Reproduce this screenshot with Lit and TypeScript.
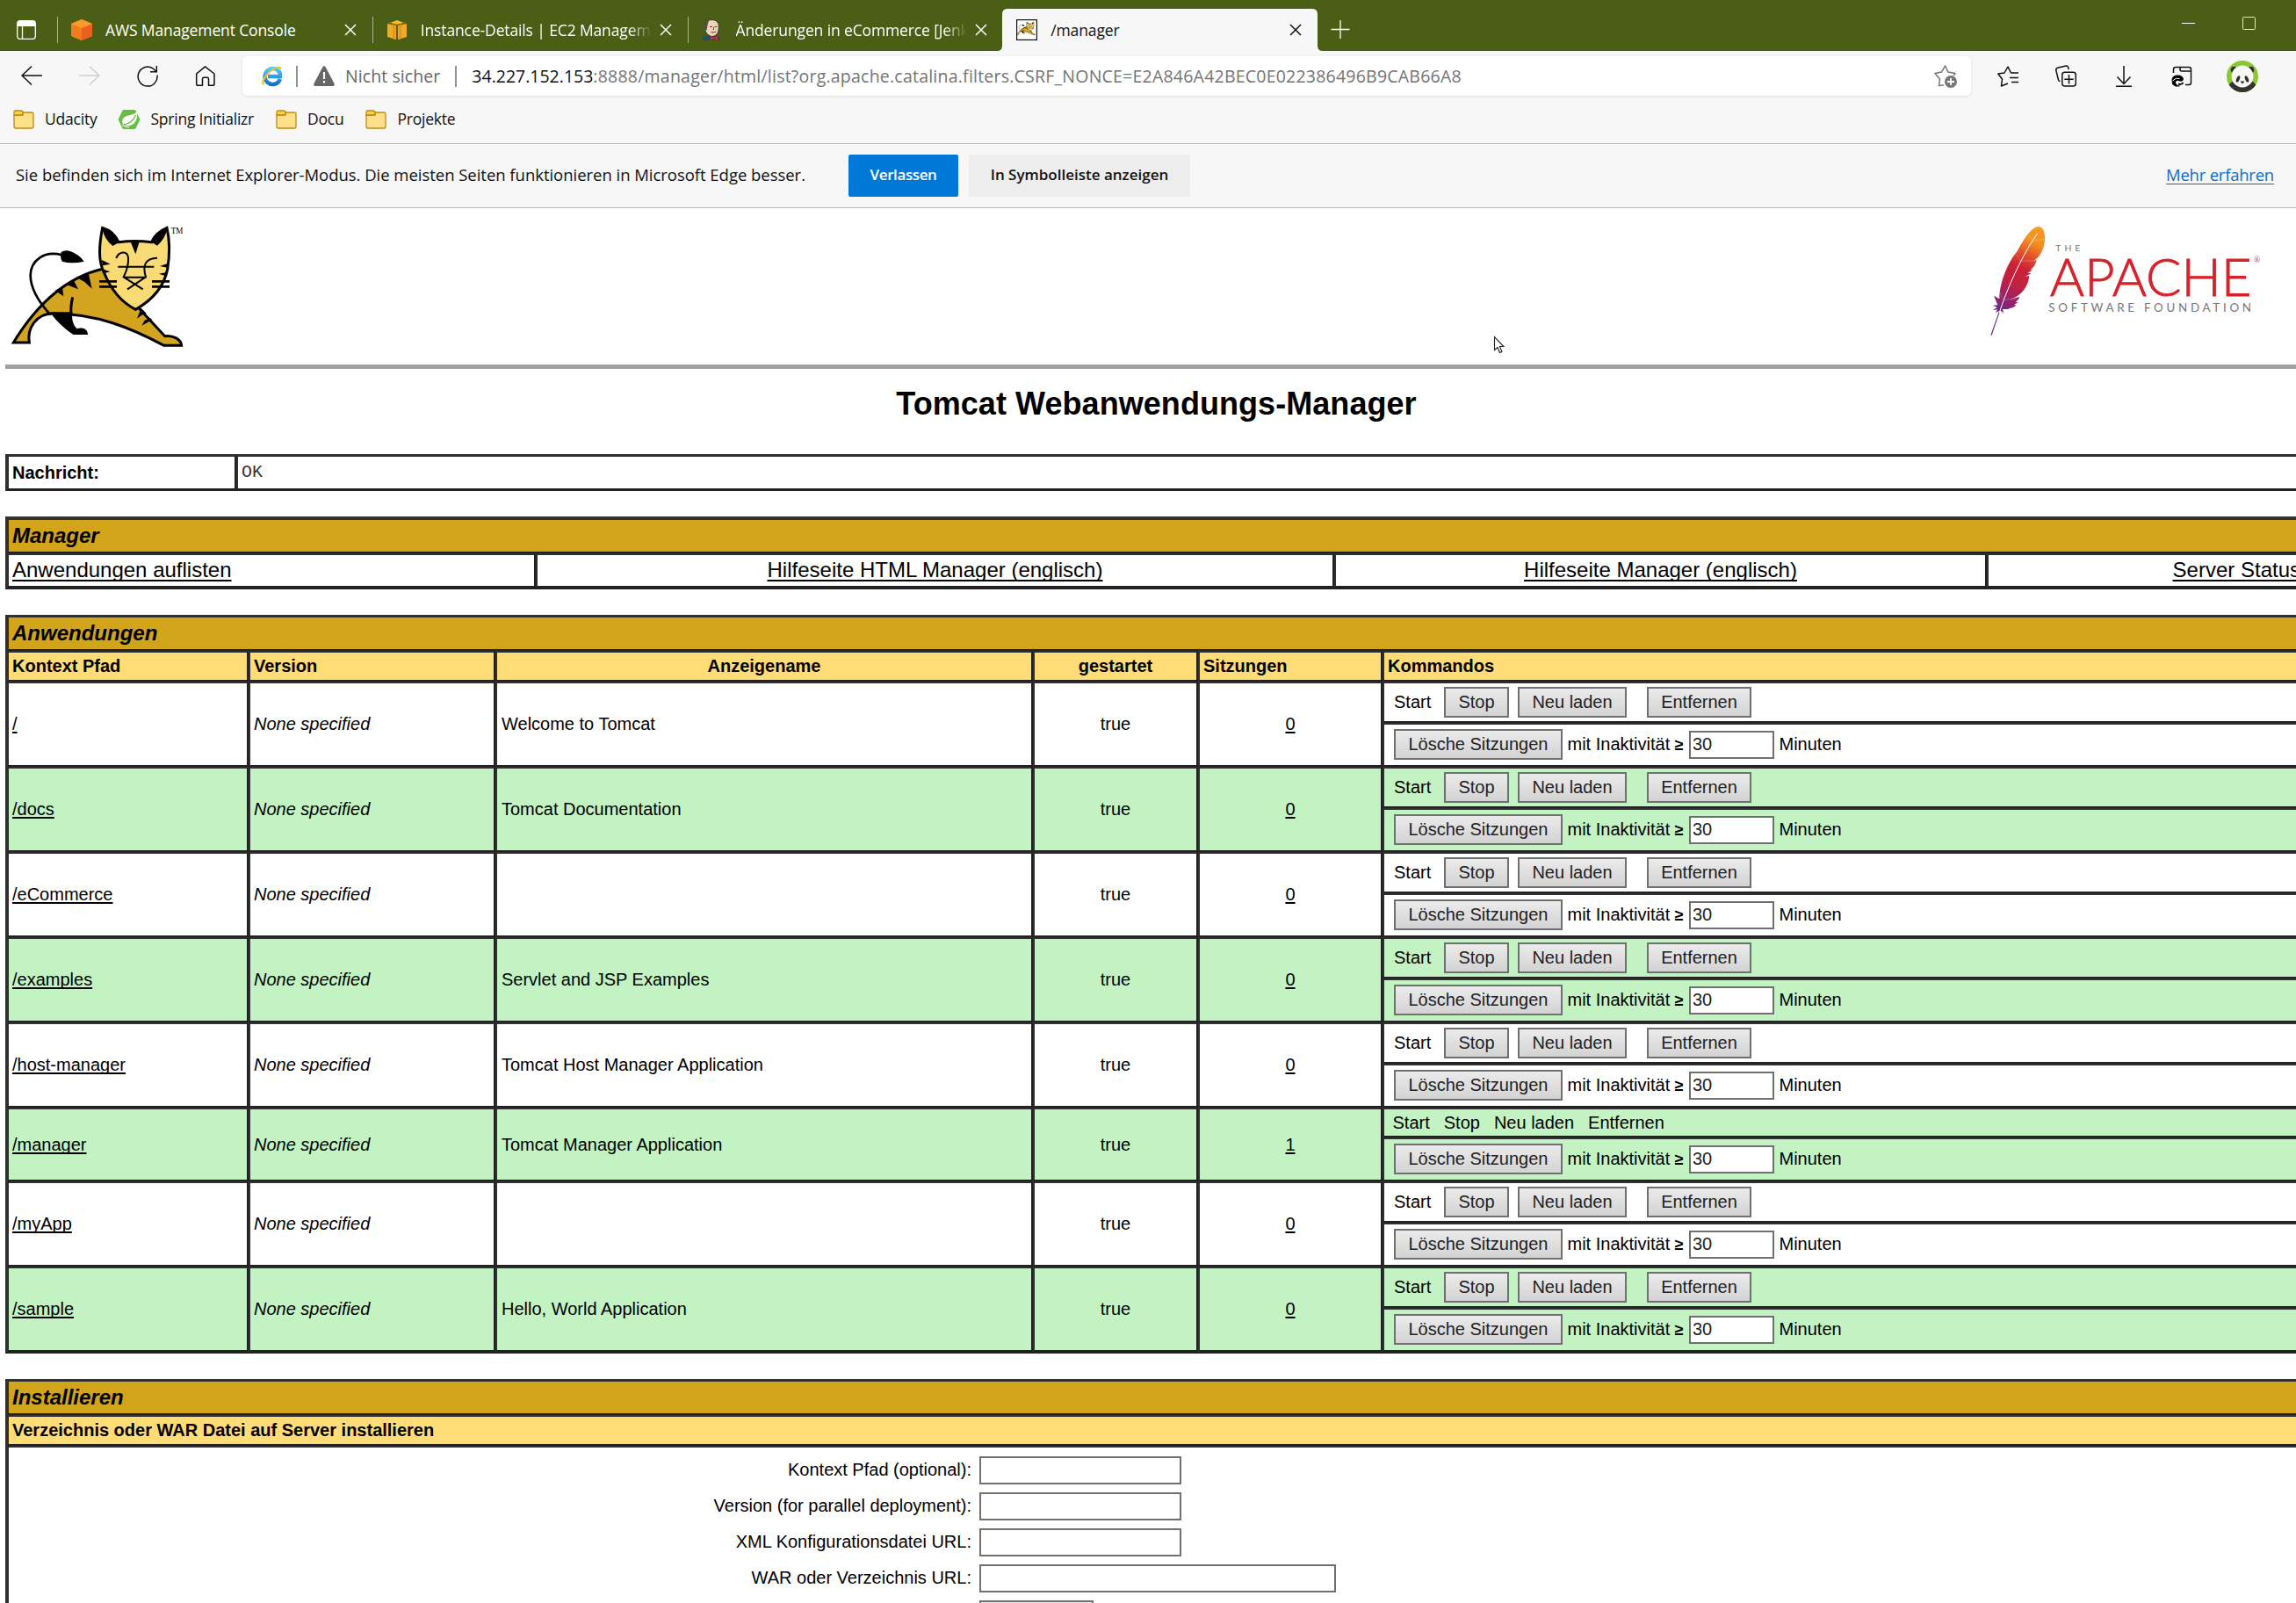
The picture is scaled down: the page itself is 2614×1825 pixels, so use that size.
import { LitElement, html, css, svg, nothing } from 'lit';
import { customElement, property } from 'lit/decorators.js';

interface WebApp {
  path: string;
  name: string;
  sessions: number;
  locked?: boolean;
}

const APPS: WebApp[] = [
  { path: '/', name: 'Welcome to Tomcat', sessions: 0 },
  { path: '/docs', name: 'Tomcat Documentation', sessions: 0 },
  { path: '/eCommerce', name: '', sessions: 0 },
  { path: '/examples', name: 'Servlet and JSP Examples', sessions: 0 },
  { path: '/host-manager', name: 'Tomcat Host Manager Application', sessions: 0 },
  { path: '/manager', name: 'Tomcat Manager Application', sessions: 1, locked: true },
  { path: '/myApp', name: '', sessions: 0 },
  { path: '/sample', name: 'Hello, World Application', sessions: 0 },
];

const catBody = svg`
  <path d="M46 480C110 375 205 262 352 228L420 320L472 360L563 458C592 455 618 468 620 490H560C450 432 330 380 180 381C122 382 92 432 100 480Z" fill="#d2a41f" stroke="#000" stroke-width="9"/>
  <path d="M211 181C150 165 105 200 104 250C104 300 138 348 172 385" fill="none" stroke="#000" stroke-width="8"/>
  <path d="M209 171Q222 162 240 168Q272 180 287 203Q245 213 212 203Q204 188 209 171Z"/>
  <path d="M170 376H248C243 400 250 420 262 432C285 427 300 434 300 453H250Q203 422 170 376Z"/>
  <path d="M248 325Q240 360 243 385" fill="none" stroke="#000" stroke-width="9"/>
  <path d="M262 258L302 242L314 296L288 272ZM226 281L252 268L267 298ZM188 302L213 292L217 322Z"/>
  <path d="M482 362L468 398L484 386L500 380ZM520 402L484 422L494 404L512 396Z"/>
  <path d="M350 88C338 150 335 200 355 240C375 290 410 340 463 367C520 335 560 290 572 230C580 180 580 130 570 88C545 98 525 118 518 137Q460 130 405 137Q390 100 350 88Z" fill="#f8db74" stroke="#000" stroke-width="9"/>
  <path d="M350 92Q395 105 405 139L385 150Q355 125 350 92ZM570 92Q525 105 515 135L537 149Q566 122 570 92ZM446 136H476L463 178Z"/>
  <path d="M348 198L377 212L350 217ZM354 230L376 238L358 243ZM572 210L546 219L572 224ZM568 240L543 245L564 252Z"/>
  <path d="M397 192C405 168 437 164 438 190C440 222 430 240 422 256L488 298M537 191C495 192 486 218 498 256L435 298M422 257H500M403 221H526" fill="none" stroke="#000" stroke-width="6"/>
  <path d="M339 271H399M339 289H399M519 271H579M519 289H579" stroke="#000" stroke-width="8"/>`;

const closeIcon = svg`<svg class="close" viewBox="0 0 14 14" width="14" height="14"><path d="M1 1L13 13M13 1L1 13" stroke="currentColor" stroke-width="1.5"/></svg>`;

const awsCube = svg`<svg viewBox="0 0 24 24" width="24" height="24"><path d="M12 0L24 5V19L12 24L0 19V5Z" fill="#f58220"/><path d="M0 5L12 10V24L0 19Z" fill="#f27d1d"/><path d="M24 5L12 10V24L24 19Z" fill="#e9601f"/><path d="M12 0L24 5L12 10L0 5Z" fill="#fb9a2a"/></svg>`;
const ec2Cube = svg`<svg viewBox="0 0 24 24" width="24" height="24"><path d="M1 5L11 7V23L1 20Z" fill="#f0ac26"/><path d="M23 5L13 7V23L23 20Z" fill="#f0ac26"/><path d="M4 4L12 1L20 4L12 6Z" fill="#f8b92c"/><path d="M7 6L10 7V23L7 22ZM17 6L14 7V23L17 22Z" fill="#e29b16"/><path d="M12 7V22" stroke="#6b5614" stroke-width="1.6"/><path d="M2 4L12 6.5L22 4" stroke="#8a6912" stroke-width="1" fill="none"/></svg>`;
const jenkins = svg`<svg viewBox="0 0 24 24" width="24" height="24"><path d="M1 24V21Q5 17.500 10 17.500L19 19Q21 21 21 24Z" fill="#2f4b63"/><path d="M3.500 10C2.500 3 7 .6 11 .6C17 .6 20 4 19.300 10C19 16 16 19.500 11.500 19.500C6.500 18.500 4 15 3.500 10Z" fill="#efd4b5" stroke="#3d2f25" stroke-width="1"/><path d="M3 12C1.500 4 5 1 9 .8C6 4 7 8 5.500 12.500Z" fill="#55504a"/><path d="M9 8.500H12M14.500 8.500H17.500M10.500 14.500Q13 16 16 14M13.500 9V12" stroke="#5b4030" stroke-width="1" fill="none"/><path d="M10 19V24L14 22L18 24V19L14 21Z" fill="#d8262b"/></svg>`;
const catIcon = svg`<svg viewBox="0 0 24 24" width="24" height="24"><rect x=".6" y=".6" width="22.8" height="22.8" fill="#fff" stroke="#111" stroke-width="1.2"/><g transform="translate(.6 2.2) scale(.036) translate(-36 -60)">${catBody}</g></svg>`;
const folder = svg`<svg viewBox="0 0 24 22" width="24" height="22"><path d="M1 6V19Q1 21 3 21H21Q23 21 23 19V5Q23 3 21 3H11V6Z" fill="#ffe08a" stroke="#b98c10" stroke-width="1.3"/><path d="M1 6V2.5Q1 1 2.5 1H9Q11 1 11 3Q11 6 8 6Z" fill="#ffcf3f" stroke="#b98c10" stroke-width="1.3"/></svg>`;
const spring = svg`<svg viewBox="0 0 24 22" width="24" height="22"><path d="M6 0H18Q19 0 19.600 1L24 10Q24.300 11 24 12L19.600 21Q19 22 18 22H6Q5 22 4.400 21L0 12Q-.3 11 0 10L4.400 1Q5 0 6 0Z" fill="#6abd45"/><path d="M21 2C18 7 7 5 4.500 11C3 15 6 18.500 11 18C18 18 22 12 21 2Z" fill="#fff"/><path d="M6 17C12 16 17 12 19.500 6" stroke="#6abd45" stroke-width="1.300" fill="none"/><path d="M4 17Q7 20 12 19.500" stroke="#fff" stroke-width="1" fill="none"/></svg>`;

@customElement('browser-tabs')
class BrowserTabs extends LitElement {
  static styles = css`
    :host { display: flex; height: 58px; background: #4a5f15; color: #fff; font: 17.5px/24px "Open Sans", "Noto Sans", sans-serif; letter-spacing: -0.13px; }
    .lead { width: 65px; display: flex; align-items: center; padding: 9px 0 0 19px; box-sizing: border-box; }
    .tab { width: 358.75px; box-sizing: border-box; display: flex; align-items: center; padding: 10px 0 0 16px; position: relative; }
    .tab::before { content: ""; position: absolute; left: 0; top: 19px; height: 30px; width: 1px; background: #a8b18d; }
    .tab.active::before { display: none; }
    .tab > svg { flex: none; }
    .title { width: 263px; margin-left: 15px; white-space: nowrap; overflow: hidden; }
    .fade { -webkit-mask-image: linear-gradient(90deg, #000 90%, transparent 100%); mask-image: linear-gradient(90deg, #000 90%, transparent 100%); }
    .tab .close { margin-left: 9px; }
    .active { color: #111; }
    .active .shape { position: absolute; left: -6px; top: 10px; }
    .active .title, .active > .close, .active > svg:not(.shape) { position: relative; }
    .plus { padding: 23px 0 0 15px; }
    .window { margin-left: auto; display: flex; gap: 53px; padding: 18px 45px 0 0; }
  `;
  render() {
    const tab = (icon: unknown, title: string, fade = false) => html`
      <div class="tab">${icon}<span class="title ${fade ? 'fade' : ''}">${title}</span>${closeIcon}</div>`;
    return html`
      <div class="lead"><svg width="22" height="22" viewBox="0 0 22 22"><rect x=".7" y=".7" width="20.600" height="20.600" rx="3" fill="none" stroke="#fff" stroke-width="1.300"/><path d="M1 7V3Q1 1 3 1H19Q21 1 21 3V7Z" fill="#fff"/><path d="M6.500 6V21" stroke="#fff" stroke-width="1.300"/></svg></div>
      ${tab(awsCube, 'AWS Management Console')}
      ${tab(ec2Cube, 'Instance-Details | EC2 Management', true)}
      ${tab(jenkins, 'Änderungen in eCommerce [Jenkins]', true)}
      <div class="tab active">
        <svg class="shape" width="371" height="48" viewBox="0 0 371 48"><path d="M0 48Q6 48 6 42V6Q6 0 12 0H359Q365 0 365 6V42Q365 48 371 48Z" fill="#f7f7f7"/></svg>
        ${catIcon}<span class="title">/manager</span>${closeIcon}
      </div>
      <div class="plus"><svg width="22" height="22" viewBox="0 0 22 22"><path d="M11 0V21M.5 10.500H21.500" stroke="#fff" stroke-width="1.300"/></svg></div>
      <div class="window">
        <svg width="16" height="17" viewBox="0 0 16 17"><path d="M0 8.500H15" stroke="#fff" stroke-width="1"/></svg>
        <svg width="16" height="17" viewBox="0 0 16 17"><rect x=".5" y="1.500" width="14" height="14" rx="1" fill="none" stroke="#dfe3d5"/></svg>
      </div>`;
  }
}

@customElement('browser-toolbar')
class BrowserToolbar extends LitElement {
  static styles = css`
    :host { display: block; background: #f7f7f7; font-family: "Open Sans", "Noto Sans", sans-serif; color: #111; }
    .bar { display: flex; align-items: center; height: 45px; padding-top: 6px; }
    svg { flex: none; display: block; }
    .nav { width: 252px; padding-left: 24px; display: flex; gap: 42px; flex: none; }
    .address { width: 1968px; flex: none; height: 45px; box-sizing: border-box; border-radius: 6px; background: #fff; box-shadow: 0 1px 4px rgba(0,0,0,.09); display: flex; align-items: center; padding: 0 14px 0 22px; font-size: 19.5px; white-space: pre; }
    .sep { width: 2px; height: 24px; background: #919191; }
    .sep.a { margin: 0 18px 0 16px; }
    .sep.b { margin: 0 17px 0 17px; }
    .insecure { color: #666; margin-left: 12px; letter-spacing: .08px; }
    .rest { color: #747474; letter-spacing: .225px; flex: 1; }
    .tools { display: flex; align-items: center; gap: 42px; padding-left: 30px; width: 340px; overflow: hidden; box-sizing: border-box; }
    .panda { margin-left: -3px; }
    .dots { margin-left: -2px; }
    .marks { display: flex; align-items: center; height: 54px; padding-left: 15px; font-size: 17.5px; letter-spacing: -.22px; border-bottom: 1px solid #bdbdbd; }
    .marks span { margin-left: 12px; margin-right: 25px; padding-bottom: 2px; }
    .hint { display: flex; align-items: center; height: 72px; padding-left: 18px; border-bottom: 1px solid #bdbdbd; }
    .msg { font-size: 18.5px; width: 948px; letter-spacing: -.03px; white-space: nowrap; padding-bottom: 3px; }
    .btn { height: 48px; line-height: 46px; border-radius: 2px; font-size: 17px; font-weight: 600; text-align: center; background: #ededed; width: 252px; color: #111; }
    .btn.go { width: 125px; background: #0078d7; color: #fff; margin-right: 12px; letter-spacing: -.4px; }
    .more { margin-left: auto; margin-right: 25px; padding-bottom: 3px; color: #0f6cc4; font-size: 18.5px; letter-spacing: -.22px; text-decoration: underline; text-underline-offset: 3px; text-decoration-thickness: 1px; }
  `;
  render() {
    return html`
      <div class="bar">
        <div class="nav">
          <svg width="24" height="24" viewBox="0 0 24 24" fill="none" stroke="#111" stroke-width="1.500"><path d="M12 .5L1 11L12 21.500M1 11H24"/></svg>
          <svg width="24" height="24" viewBox="0 0 24 24" fill="none" stroke="#cfcfcf" stroke-width="1.500"><path d="M12 .5L23 11L12 21.500M23 11H0"/></svg>
          <svg width="24" height="24" viewBox="0 0 24 24" fill="none" stroke="#111" stroke-width="1.500"><path d="M23 10.500A11 11 0 1 1 18 2.800L22 6.500M22.300 0V6.700H15"/></svg>
          <svg width="24" height="24" viewBox="0 0 24 24" fill="none" stroke="#111" stroke-width="1.500" stroke-linejoin="round"><path d="M1.700 9L11.500 .8L22 9V20.500Q22 22.300 20.300 22.300H15.500V15Q15.500 13.300 14 13.300H10Q8.500 13.300 8.500 15V22.300H3.500Q1.700 22.300 1.700 20.500Z"/></svg>
        </div>
        <div class="address">
          <svg width="23" height="24" viewBox="0 0 23 24"><defs><linearGradient id="ie" x1="0" y1="0" x2="0" y2="1"><stop offset="0" stop-color="#56c8f5"/><stop offset="1" stop-color="#1174c8"/></linearGradient></defs><path d="M21 15A9 9 0 1 1 21.500 12H7" fill="none" stroke="url(#ie)" stroke-width="4.500"/><path d="M3 21C-2 20 4 11 10 6S22 0 21 4" fill="none" stroke="#f9bd1e" stroke-width="2"/></svg>
          <span class="sep a"></span>
          <svg width="24" height="24" viewBox="0 0 24 24"><path d="M12 0Q13 0 14 2L23.500 20Q24.500 23 22 23H2Q-.5 23 .5 20L10 2Q11 0 12 0Z" fill="#666"/><path d="M12 7V15M12 17V19.500" stroke="#fff" stroke-width="2.200"/></svg>
          <span class="insecure">Nicht sicher</span><span class="sep b"></span><span>34.227.152.153</span><span class="rest">:8888/manager/html/list?org.apache.catalina.filters.CSRF_NONCE=E2A846A42BEC0E022386496B9CAB66A8</span>
          <svg width="28" height="26" viewBox="0 0 28 26" fill="none" stroke="#777" stroke-width="1.500"><path d="M11 23L5.500 23.500L6.500 16L1 9.500L8.500 8L12.500 1L16 8L24 9.500L22 12"/><circle cx="19" cy="19" r="7" fill="#777" stroke="none"/><path d="M15 19H23M19 15V23" stroke="#fff" stroke-width="1.800"/></svg>
        </div>
        <div class="tools">
          <svg width="24" height="24" viewBox="0 0 24 24" fill="none" stroke="#111" stroke-width="1.500" stroke-linejoin="round"><path d="M12 20L4.500 23L5.500 15L.8 9L8 8L12 1L15.500 8H24M14 13.500H24M16 18.500H24"/></svg>
          <svg width="24" height="25" viewBox="0 0 24 25" fill="none" stroke="#111" stroke-width="1.500"><rect x="7.800" y="8.200" width="15.500" height="15.800" rx="3"/><path d="M15.500 11V21.500M10.300 16.200H20.800M5.500 18.500Q4 18.500 3.500 17L.8 6Q.5 4 2.500 3.300L12 1Q14 .7 14.600 2.500L15.200 5"/></svg>
          <svg width="24" height="24" viewBox="0 0 24 24" fill="none" stroke="#111" stroke-width="1.500"><path d="M12 0V20M4.500 12.500L12 20.500L19.500 12.500M3 23.200H21"/></svg>
          <svg width="24" height="24" viewBox="0 0 24 24" fill="none" stroke="#111" stroke-width="1.500"><path d="M2.500 8V4Q2.500 1.500 5 1.500H20Q22.500 1.500 22.500 4V19Q22.500 21.500 20 21.500H16M10 1.500V4Q10 6 12 6H22"/><path d="M.5 16Q1 10.500 7.500 10.500Q13 10.500 14 15Q13.500 18 9.500 17.500Q6 15.500 5 18.500Q5 22 10.500 23Q4 25 1 20.500Z" fill="#000" stroke="none"/><path d="M1.500 17Q5 12.800 9.500 14.500" stroke="#f7f7f7" stroke-width="1"/><path d="M8 20.500Q12 22 13.500 18.800" stroke-width="2"/></svg>
          <svg class="panda" width="36" height="36" viewBox="0 0 36 36"><defs><clipPath id="pc"><circle cx="18" cy="18" r="18"/></clipPath></defs><g clip-path="url(#pc)"><rect width="36" height="36" fill="#8ac832"/><ellipse cx="18" cy="34" rx="17" ry="14" fill="#33332f"/><circle cx="8.500" cy="10.500" r="3.800" fill="#2d2d2b"/><circle cx="27.500" cy="10.500" r="3.800" fill="#2d2d2b"/><ellipse cx="18" cy="18" rx="12.500" ry="12.500" fill="#f7f6f4"/><ellipse cx="13" cy="21" rx="1.800" ry="4" fill="#2d2d2b" transform="rotate(22 13 21)"/><ellipse cx="23" cy="21" rx="1.800" ry="4" fill="#2d2d2b" transform="rotate(-22 23 21)"/><path d="M15.500 23.500H20.500L18 26.500Z" fill="#222"/></g></svg>
          <svg class="dots" width="20" height="24" viewBox="0 0 20 24"><circle cx="3" cy="12" r="1.800" fill="#111"/></svg>
        </div>
      </div>
      <div class="marks">${folder}<span>Udacity</span>${spring}<span>Spring Initializr</span>${folder}<span>Docu</span>${folder}<span>Projekte</span></div>
      <div class="hint">
        <div class="msg">Sie befinden sich im Internet Explorer-Modus. Die meisten Seiten funktionieren in Microsoft Edge besser.</div>
        <div class="btn go">Verlassen</div>
        <div class="btn">In Symbolleiste anzeigen</div>
        <a class="more">Mehr erfahren</a>
      </div>`;
  }
}

@customElement('page-logos')
class PageLogos extends LitElement {
  static styles = css`
    :host { display: flex; justify-content: space-between; height: 178px; padding-right: 47px; border-bottom: 5px solid #a0a0a0; }
    svg { display: block; }
    .tm { font: 29px "Liberation Serif", serif; }
    .small { font-family: Lato, sans-serif; fill: #77787b; }
    .big { font-family: Lato, sans-serif; font-weight: 300; font-size: 180px; fill: #d7222b; stroke: #d7222b; stroke-width: 2.5px; }
  `;
  render() {
    return html`
      <svg width="208" height="178" viewBox="18 21 624 534">${catBody}<text class="tm" x="584" y="107" textLength="41" lengthAdjust="spacingAndGlyphs">TM</text></svg>
      <svg width="320" height="178" viewBox="180 21 960 534">
        <defs><linearGradient id="f" gradientUnits="userSpaceOnUse" x1="365" y1="85" x2="225" y2="370">
          <stop offset="0" stop-color="#f79a23"/><stop offset=".17" stop-color="#f39022"/><stop offset=".34" stop-color="#e04d2c"/><stop offset=".48" stop-color="#cc2136"/><stop offset=".66" stop-color="#c3203f"/><stop offset=".86" stop-color="#94246c"/><stop offset="1" stop-color="#6b2a87"/>
        </linearGradient></defs>
        <path d="M362 84C376 84 386 98 384 130C382 158 370 186 347 201L356 197C352 216 344 225 334 232L342 233L325 242L338 243L317 255L331 252C327 290 306 314 280 327L262 333L298 324Q296 334 284 340L292 343L280 350L286 353Q270 368 240 366L243 380L232 370L203 455H199L228 372L216 378L222 367L205 370L221 360L207 353L223 352L210 320L229 331C227 290 252 212 290 168C312 126 340 84 362 84Z" fill="url(#f)"/>
        <path d="M359 107C315 170 275 250 238 350L229 378" fill="none" stroke="#fff" stroke-width="3"/>
        <path d="M330 115L345 131L383 128M286 178L302 202L352 200M230 308L244 334L282 331" fill="none" stroke="#fff" stroke-width="1.500" stroke-dasharray="3 2" opacity=".7"/>
        <text class="small" x="421" y="167" font-size="31" textLength="84">THE</text>
        <text class="big" x="401" y="322" textLength="690">APACHE</text>
        <text class="small" x="397" y="376" font-size="40" textLength="692">SOFTWARE FOUNDATION</text>
        <text class="small" x="1098" y="208" font-size="26">®</text>
      </svg>`;
  }
}

@customElement('app-commands')
class AppCommands extends LitElement {
  @property({ type: Boolean }) locked = false;
  static styles = css`
    :host { display: block; }
    .row { display: flex; align-items: center; height: 50px; box-sizing: border-box; border: 2px solid; border-color: #303032 #212121 #212121 #303032; padding: 0 0 1px 11px; white-space: pre; }
    .row.top { height: 47px; padding-bottom: 0; }
    .row.flat { height: 34px; padding: 0 0 0 9.5px; }
    .flat span { margin-right: 16px; }
    .start { width: 57px; }
    .btn { height: 35px; line-height: 31px; box-sizing: border-box; border: 2px solid #707070; background: linear-gradient(#ebebeb, #d3d3d3); color: #222; text-align: center; }
    .stop { width: 74px; margin-right: 10px; }
    .reload { width: 124px; margin-right: 23px; }
    .undeploy { width: 119px; }
    .expire { width: 192px; margin-right: 5.5px; }
    .idle { width: 138.5px; }
    .ge { font-weight: 700; font-size: 18px; }
    .field { width: 97px; height: 32px; line-height: 26px; box-sizing: border-box; border: 2px solid #707070; background: #fff; color: #222; padding-left: 2px; margin: 1px 5.5px 0 0; }
  `;
  render() {
    return html`
      ${this.locked
        ? html`<div class="row flat"><span>Start</span><span>Stop</span><span>Neu laden</span><span>Entfernen</span></div>`
        : html`<div class="row top"><span class="start">Start</span><div class="btn stop">Stop</div><div class="btn reload">Neu laden</div><div class="btn undeploy">Entfernen</div></div>`}
      <div class="row"><div class="btn expire">Lösche Sitzungen</div><span class="idle">mit Inaktivität <span class="ge">≥</span></span><div class="field">30</div><span>Minuten</span></div>`;
  }
}

@customElement('app-root')
class AppRoot extends LitElement {
  static styles = css`
    :host { display: block; width: 2614px; height: 1825px; overflow: hidden; position: relative; background: #fff; color: #000; font: 20px/23px "Liberation Sans", Arial, sans-serif; }
    .page { width: 2621px; margin-left: 6px; }
    h1 { margin: 0; height: 97px; line-height: 80px; font-size: 36px; text-align: center; letter-spacing: .06px; }
    .table { box-sizing: border-box; border: solid; border-width: 1px 2px; border-color: #303032 #212121 #212121 #303032; display: grid; }
    .cell { box-sizing: border-box; border: 2px solid; border-color: #303032 #212121 #212121 #303032; padding: 0 4px; display: flex; align-items: center; white-space: pre; }
    .message { grid-template-columns: 261px 1fr; grid-template-rows: 40px; margin-bottom: 29px; }
    .message .bold { padding-top: 1px; }
    .bold { font-weight: 700; }
    .mono { font-family: "Liberation Mono", "Courier New", monospace; color: #333; padding-bottom: 1px; }
    .links { grid-template-columns: 602px 909px 743px 1fr; grid-template-rows: 40px 39px; border-width: 2px; margin-bottom: 29px; font-size: 24px; }
    .links .cell:not(.head) { padding-bottom: 2px; }
    .head { grid-column: 1 / -1; background: #d2a41a; font: italic 700 24px/28px "Liberation Sans", Arial, sans-serif; }
    .sub { background: #ffdc75; font-weight: 700; }
    .apps { grid-template-columns: 275px 281px 612px 188px 210px 1fr; grid-template-rows: 40px 35px; border-bottom-width: 2px; margin-bottom: 29px; }
    .name { padding-left: 5px; }
    .install { grid-template-rows: 40px 35px 260px; }
    .center { justify-content: center; }
    .right { justify-content: flex-end; }
    .alt { background: #c3f3c3; }
    .ital { font-style: italic; }
    a { text-decoration: underline; text-decoration-thickness: 2px; text-underline-offset: 2px; text-decoration-skip-ink: none; }
    .links a { text-underline-offset: 3px; }
    .form { align-items: flex-start; padding: 10px 0 0; display: grid; grid-template-columns: 1096px 1fr; grid-auto-rows: 32px; row-gap: 9px; column-gap: 9px; }
    .label { text-align: right; line-height: 31px; }
    .input { width: 230px; height: 32px; box-sizing: border-box; border: 2px solid #707070; }
    .input.wide { width: 406px; }
    .submit { width: 130px; height: 35px; box-sizing: border-box; border: 2px solid #707070; background: linear-gradient(#ebebeb, #d3d3d3); }
    .cursor { position: absolute; left: 1700px; top: 382px; }
  `;
  render() {
    return html`
      <browser-tabs></browser-tabs>
      <browser-toolbar></browser-toolbar>
      <main class="page">
        <page-logos></page-logos>
        <h1>Tomcat Webanwendungs-Manager</h1>
        <div class="table message"><div class="cell bold">Nachricht:</div><div class="cell mono">OK</div></div>
        <div class="table links">
          <div class="cell head">Manager</div>
          <div class="cell"><a>Anwendungen auflisten</a></div>
          <div class="cell center"><a>Hilfeseite HTML Manager (englisch)</a></div>
          <div class="cell center"><a>Hilfeseite Manager (englisch)</a></div>
          <div class="cell right"><a>Server Status</a></div>
        </div>
        <div class="table apps">
          <div class="cell head">Anwendungen</div>
          <div class="cell sub">Kontext Pfad</div>
          <div class="cell sub">Version</div>
          <div class="cell sub center">Anzeigename</div>
          <div class="cell sub center">gestartet</div>
          <div class="cell sub">Sitzungen</div>
          <div class="cell sub">Kommandos</div>
          ${APPS.map((app, i) => {
            const alt = i % 2 ? 'alt' : '';
            return html`
              <div class="cell ${alt}"><a>${app.path}</a></div>
              <div class="cell ital ${alt}">None specified</div>
              <div class="cell name ${alt}">${app.name || nothing}</div>
              <div class="cell center ${alt}">true</div>
              <div class="cell center ${alt}"><a>${app.sessions}</a></div>
              <app-commands class="${alt}" .locked=${!!app.locked}></app-commands>`;
          })}
        </div>
        <div class="table install">
          <div class="cell head">Installieren</div>
          <div class="cell sub">Verzeichnis oder WAR Datei auf Server installieren</div>
          <div class="cell form">
            <div class="label">Kontext Pfad (optional):</div><div class="input"></div>
            <div class="label">Version (for parallel deployment):</div><div class="input"></div>
            <div class="label">XML Konfigurationsdatei URL:</div><div class="input"></div>
            <div class="label">WAR oder Verzeichnis URL:</div><div class="input wide"></div>
            <div class="label"></div><div class="submit"></div>
          </div>
        </div>
      </main>
      <svg class="cursor" width="14" height="22" viewBox="0 0 14 22"><path d="M1.500 1.500V16.500L5 13.500L7.500 19.500L10 18.500L7.500 12.500H12Z" fill="#fff" stroke="#222" stroke-width="1.100"/></svg>`;
  }
}
